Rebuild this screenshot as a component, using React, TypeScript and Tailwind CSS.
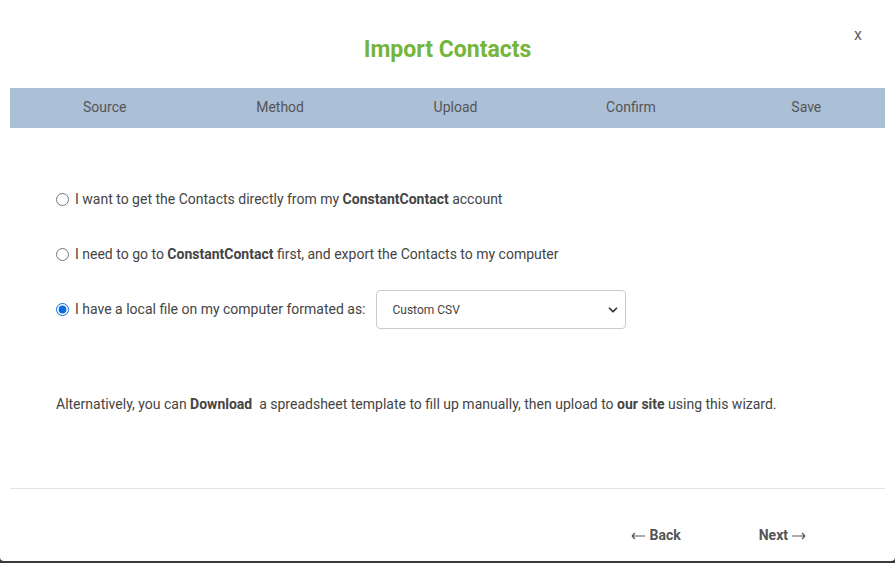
import { ChevronDown } from "lucide-react";

function Arrow({ left }: { left?: boolean }) {
  return (
    <svg width="14" height="8" viewBox="0 0 14 8" fill="none" stroke="#555" strokeWidth="1.2" className={left ? "" : "rotate-180"}>
      <path d="M1 4h13M1 4l3-3M1 4l3 3" />
    </svg>
  );
}

export default function App() {
  const steps = ["Source", "Method", "Upload", "Confirm", "Save"];

  return (
    <div className="w-[895px] h-[563px] bg-[#3a3a3a] overflow-hidden" style={{ fontFamily: "Roboto, 'Noto Sans', sans-serif" }}>
      <div className="relative h-[561px] bg-white rounded-b-[4px] flex flex-col text-[14px] text-[#444]">
        {/* Close */}
        <button className="absolute right-[33px] top-[23px] text-[16px] text-[#666]">x</button>

        {/* Title */}
        <h2 className="pt-[35px] text-center text-[23px] font-bold text-[#76b53b] leading-[30px]">Import Contacts</h2>

        {/* Steps */}
        <div className="mx-[10px] mt-[23px] h-[40px] bg-[#abbfd7] overflow-hidden">
          <div className="ml-[7px] w-[877px] h-full grid grid-cols-5 items-center text-center text-[#555]">
            {steps.map((s) => (
              <div key={s} className="pb-[2px]">{s}</div>
            ))}
          </div>
        </div>

        {/* Options */}
        <div className="px-[56px] pt-[60px] flex flex-col">
          <label className="flex items-center gap-[6px] h-[22px]">
            <input type="radio" name="src" className="w-[13px] h-[13px] m-0" />
            <span>
              I want to get the Contacts directly from my <b className="font-bold">ConstantContact</b> account
            </span>
          </label>
          <label className="flex items-center gap-[6px] h-[22px] mt-[33px]">
            <input type="radio" name="src" className="w-[13px] h-[13px] m-0" />
            <span>
              I need to go to <b className="font-bold">ConstantContact</b> first, and export the Contacts to my computer
            </span>
          </label>
          <div className="flex items-center mt-[25px]">
            <label className="flex items-center gap-[6px]">
              <input type="radio" name="src" defaultChecked className="w-[13px] h-[13px] m-0 accent-[#0a6bdc]" />
              <span>I have a local file on my computer formated as:</span>
            </label>
            <div className="ml-[10px] w-[250px] h-[39px] border border-[#ccc] rounded-[4px] flex items-center justify-between pl-[16px] pr-[5px] text-[12px] text-[#444]">
              <span>Custom CSV</span>
              <ChevronDown size={14} strokeWidth={3} className="text-[#333]" />
            </div>
          </div>

          <p className="mt-[65px]">
            Alternatively, you can <b className="font-bold">Download</b>&nbsp; a spreadsheet template to fill up manually, then upload to{" "}
            <b className="font-bold">our site</b> using this wizard.
          </p>
        </div>

        {/* Footer */}
        <div className="mx-[10px] mt-[73px] border-t border-[#e3e3e3]" />
        <div className="flex justify-end items-center gap-[78px] pr-[89px] pt-[36px] font-bold text-[#555]">
          <span className="flex items-center gap-[4px]">
            <Arrow left />Back
          </span>
          <span className="flex items-center gap-[4px]">
            Next<Arrow />
          </span>
        </div>
      </div>
    </div>
  );
}
